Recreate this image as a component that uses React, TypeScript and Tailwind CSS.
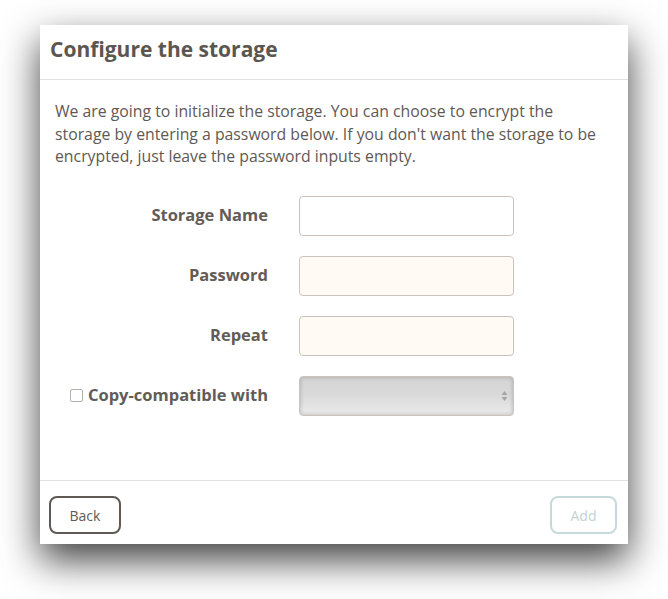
import React from "react";

export default function App() {
  const font = { fontFamily: "'Open Sans', 'Noto Sans', sans-serif" };
  return (
    <div className="w-[668px] h-[599px] bg-white pt-[25px] pl-[40px]" style={font}>
      <div className="w-[588px] h-[519px] bg-white flex flex-col shadow-[0_16px_36px_rgba(0,0,0,0.75)] text-[#5f5955]">
        <div className="h-[55px] border-b border-[#e3e1df] pl-[10px] flex items-center">
          <h1 className="text-[21px] font-bold text-[#5c5650] -mt-[4px]">Configure the storage</h1>
        </div>
        <div className="flex-1 pt-[20px] px-[15px]">
          <p className="max-w-[549px] text-[15.8px] leading-[22.5px]">
            We are going to initialize the storage. You can choose to encrypt the storage by entering a password below. If you don't want the storage to be encrypted, just leave the password inputs empty.
          </p>
          <div className="mt-[28px] flex flex-col gap-[20px]">
            <div className="flex items-center">
              <label className="w-[213px] text-right text-[16.5px] font-bold text-[#635c56]">Storage Name</label>
              <input className="ml-[31px] w-[215px] h-[40px] rounded-[4px] border border-[#cbc3bb] bg-white outline-none" />
            </div>
            <div className="flex items-center">
              <label className="w-[213px] text-right text-[16.5px] font-bold text-[#635c56]">Password</label>
              <input type="password" className="ml-[31px] w-[215px] h-[40px] rounded-[4px] border border-[#cbc3bb] bg-[#fffbf4] outline-none" />
            </div>
            <div className="flex items-center">
              <label className="w-[213px] text-right text-[16.5px] font-bold text-[#635c56]">Repeat</label>
              <input type="password" className="ml-[31px] w-[215px] h-[40px] rounded-[4px] border border-[#cbc3bb] bg-[#fffbf4] outline-none" />
            </div>
            <div className="flex items-center">
              <label className="w-[213px] flex items-center justify-end text-[16.5px] font-bold text-[#635c56] whitespace-nowrap">
                <span className="w-[13px] h-[13px] shrink-0 rounded-[2px] border border-[#b5b0ab] bg-white mr-[5px]"></span>
                Copy-compatible with
              </label>
              <div className="ml-[31px] w-[215px] h-[40px] rounded-[4px] border border-[#cbc3bb] bg-gradient-to-b from-[#d4d4d4] via-[#dadada] to-[#ebebeb] shadow-[inset_0_0_4px_rgba(0,0,0,0.22)] flex items-center justify-end pr-[5px]">
                <svg width="7" height="12" viewBox="0 0 7 12">
                  <path d="M3.5 1 L6.5 5 L0.5 5 Z" fill="#a5a5a5" />
                  <path d="M3.5 11 L6.5 7 L0.5 7 Z" fill="#a5a5a5" />
                </svg>
              </div>
            </div>
          </div>
        </div>
        <div className="h-[64px] border-t border-[#e3e1df] flex items-start justify-between pt-[15px] pl-[9px] pr-[11px]">
          <button className="w-[72px] h-[38px] rounded-[8px] border-2 border-[#5f5a55] text-[14px] text-[#5f5955]">Back</button>
          <button className="w-[67px] h-[38px] rounded-[8px] border-2 border-[#c7dada] text-[14px] text-[#c3d2d2]">Add</button>
        </div>
      </div>
    </div>
  );
}
